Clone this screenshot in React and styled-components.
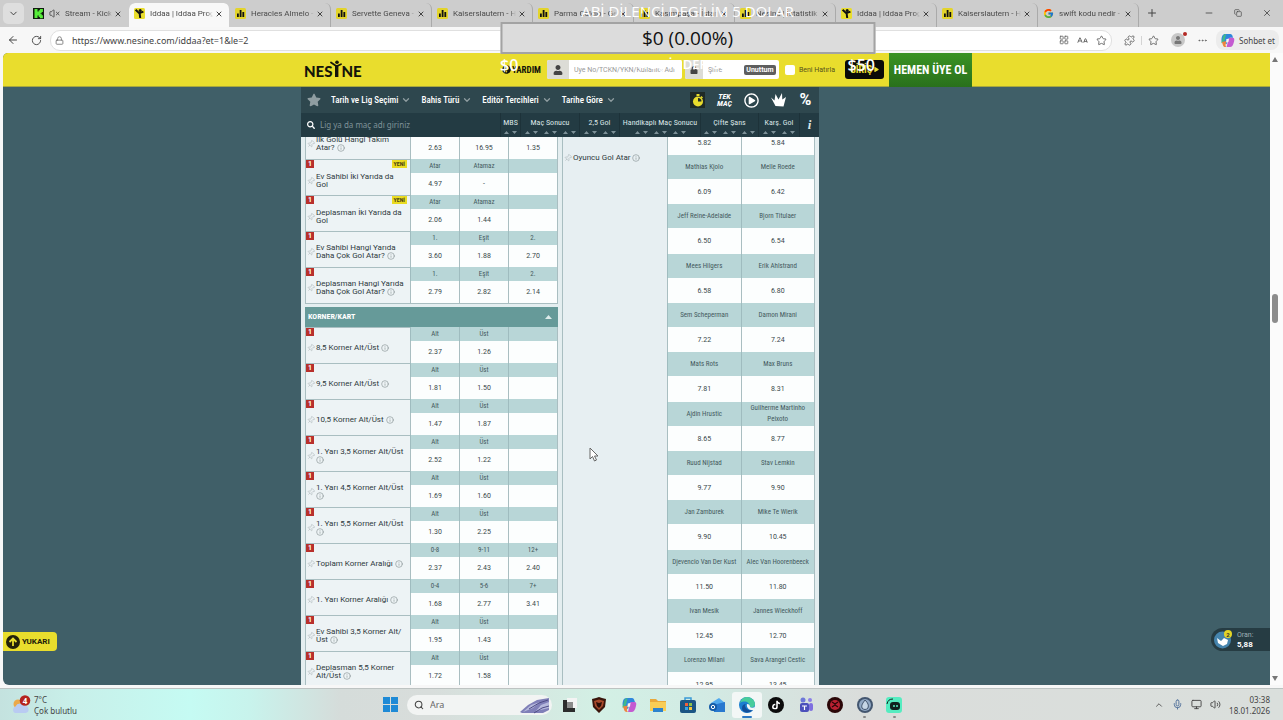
import React from "react";
import styled, { createGlobalStyle } from "styled-components";
import {
  ChevronDown, ChevronUp, X, Plus, Minus, Copy, ArrowLeft, RotateCw, Lock, LayoutGrid, Star, Puzzle,
  Ellipsis, VolumeX, Volume2, Mic, Monitor, Search, Pin, Info, ALargeSmall,
} from "lucide-react";
import { FcGoogle } from "react-icons/fc";
import { FaStar, FaSearch, FaUser, FaLock, FaPlay, FaTiktok, FaRegPlayCircle, FaQuestionCircle } from "react-icons/fa";

const narrow = `"Roboto Condensed", "Liberation Sans Narrow", Roboto, sans-serif`;
const ui = `"Noto Sans", "Open Sans", sans-serif`;

const tabs = [
  { icon: "kick", title: "Stream - Kick", muted: true },
  { icon: "nesine", title: "Iddaa | Iddaa Programı", active: true },
  { icon: "stats", title: "Heracles Almelo - İstatistik" },
  { icon: "stats", title: "Servette Geneva - İstatistik" },
  { icon: "stats", title: "Kaiserslautern - Hertha" },
  { icon: "stats", title: "Parma Calcio - Genoa" },
  { icon: "stats", title: "Kasımpaşa - İstanbul" },
  { icon: "stats", title: "Nesine | İstatistik" },
  { icon: "nesine", title: "Iddaa | Iddaa Programı" },
  { icon: "stats", title: "Kaiserslautern - Hertha" },
  { icon: "google", title: "swift kodu nedir - Google" },
];

const menus = ["Tarih ve Lig Seçimi", "Bahis Türü", "Editör Tercihleri", "Tarihe Göre"];

const sortColumns = [
  { label: "MBS", width: 20, pairs: 1 },
  { label: "Maç Sonucu", width: 59, pairs: 3 },
  { label: "2,5 Gol", width: 40, pairs: 2 },
  { label: "Handikaplı Maç Sonucu", width: 81, pairs: 3 },
  { label: "Çifte Şans", width: 58, pairs: 3 },
  { label: "Karş. Gol", width: 41, pairs: 2 },
];

const goalMarkets = [
  { name: "İlk Golü Hangi Takım Atar?", info: true, heads: ["1", "Olmaz", "2"], odds: ["2.63", "16.95", "1.35"] },
  { name: "Ev Sahibi İki Yarıda da Gol", fresh: true, heads: ["Atar", "Atamaz", ""], odds: ["4.97", "-", ""] },
  { name: "Deplasman İki Yarıda da Gol", fresh: true, heads: ["Atar", "Atamaz", ""], odds: ["2.06", "1.44", ""] },
  { name: "Ev Sahibi Hangi Yarıda Daha Çok Gol Atar?", info: true, heads: ["1.", "Eşit", "2."], odds: ["3.60", "1.88", "2.70"] },
  { name: "Deplasman Hangi Yarıda Daha Çok Gol Atar?", info: true, heads: ["1.", "Eşit", "2."], odds: ["2.79", "2.82", "2.14"] },
];

const cornerMarkets = [
  { name: "8,5 Korner Alt/Üst", info: true, heads: ["Alt", "Üst", ""], odds: ["2.37", "1.26", ""] },
  { name: "9,5 Korner Alt/Üst", info: true, heads: ["Alt", "Üst", ""], odds: ["1.81", "1.50", ""] },
  { name: "10,5 Korner Alt/Üst", info: true, heads: ["Alt", "Üst", ""], odds: ["1.47", "1.87", ""] },
  { name: "1. Yarı 3,5 Korner Alt/Üst", info: true, heads: ["Alt", "Üst", ""], odds: ["2.52", "1.22", ""] },
  { name: "1. Yarı 4,5 Korner Alt/Üst", info: true, heads: ["Alt", "Üst", ""], odds: ["1.69", "1.60", ""] },
  { name: "1. Yarı 5,5 Korner Alt/Üst", info: true, heads: ["Alt", "Üst", ""], odds: ["1.30", "2.25", ""] },
  { name: "Toplam Korner Aralığı", info: true, heads: ["0-8", "9-11", "12+"], odds: ["2.37", "2.43", "2.40"] },
  { name: "1. Yarı Korner Aralığı", info: true, heads: ["0-4", "5-6", "7+"], odds: ["1.68", "2.77", "3.41"] },
  { name: "Ev Sahibi 3,5 Korner Alt/Üst", info: true, heads: ["Alt", "Üst", ""], odds: ["1.95", "1.43", ""] },
  { name: "Deplasman 5,5 Korner Alt/Üst", info: true, heads: ["Alt", "Üst", ""], odds: ["1.72", "1.58", ""] },
];

const scorers = [
  [["", "5.82"], ["", "5.84"]],
  [["Mathias Kjolo", "6.09"], ["Melle Roede", "6.42"]],
  [["Jeff Reine-Adelaide", "6.50"], ["Bjorn Titulaer", "6.54"]],
  [["Mees Hilgers", "6.58"], ["Erik Ahlstrand", "6.80"]],
  [["Sem Scheperman", "7.22"], ["Damon Mirani", "7.24"]],
  [["Mats Rots", "7.81"], ["Max Bruns", "8.31"]],
  [["Ajdin Hrustic", "8.65"], ["Guilherme Martinho Peixoto", "8.77"]],
  [["Ruud Nijstad", "9.77"], ["Stav Lemkin", "9.90"]],
  [["Jan Zamburek", "9.90"], ["Mike Te Wierik", "10.45"]],
  [["Djevencio Van Der Kust", "11.50"], ["Alec Van Hoorenbeeck", "11.80"]],
  [["Ivan Mesik", "12.45"], ["Jannes Wieckhoff", "12.70"]],
  [["Lorenzo Milani", "12.95"], ["Sava Arangel Cestic", "13.45"]],
];

const GlobalStyle = createGlobalStyle`
  * { box-sizing: border-box; }
  body { margin: 0; background: #f7f7f7; font-family: ${ui}; }
  button, input { font-family: inherit; margin: 0; padding: 0; border: 0; background: none; color: inherit; }
  input { min-width: 0; outline: none; }
  a { color: inherit; text-decoration: none; }
  svg { display: block; flex: none; }
`;

const Screen = styled.div`
  position: relative;
  display: flex;
  flex-direction: column;
  height: 100vh;
  overflow: hidden;
`;

/* ---------- browser ---------- */

const TabStrip = styled.div`
  display: flex;
  align-items: stretch;
  height: 27px;
  padding: 3px 2px 0 3px;
  background: #cdcdcd;
  flex: none;
`;

const TabSearch = styled.button`
  display: grid;
  place-items: center;
  width: 21px;
  height: 21px;
  margin-right: 4px;
  border-radius: 5px;
  background: #dedede;
  color: #333;
`;

const Tab = styled.div`
  display: flex;
  align-items: center;
  gap: 5px;
  flex: 0 1 101px;
  min-width: 0;
  padding: 0 6px 3px 5px;
  border-radius: 6px 6px 0 0;
  border-right: 1px solid ${(p) => (p.$active || p.$muted ? "transparent" : "#aaa")};
  background: ${(p) => (p.$active ? "#f8f8f8" : "none")};
  background-clip: padding-box;
  color: #4a4a4a;
`;

const TabTitle = styled.span`
  flex: 1;
  overflow: hidden;
  white-space: nowrap;
  margin-right: -3px;
  font: 8px/12px Roboto, sans-serif;
  mask-image: linear-gradient(90deg, #000 90%, transparent);
`;

const PlainButton = styled.button`
  display: grid;
  place-items: center;
  color: #444;
`;

const NewTab = styled(PlainButton)`
  width: 26px;
  height: 20px;
`;

const WindowButtons = styled.div`
  display: flex;
  gap: 20px;
  height: 20px;
  margin-left: auto;
  padding-right: 9px;
`;

const AddressBar = styled.div`
  display: flex;
  align-items: center;
  gap: 12px;
  height: 26px;
  padding: 0 4px 0 7px;
  background: #f7f7f7;
  color: #666;
  flex: none;
`;

const UrlBox = styled.label`
  display: flex;
  align-items: center;
  gap: 8px;
  flex: 1;
  height: 21px;
  margin-left: -4px;
  padding: 0 4px;
  border: 1px solid #e0e0e0;
  border-radius: 10px;
  background: #fff;
`;

const UrlInput = styled.input`
  flex: 1;
  font-size: 9px;
  color: #444;
`;

const Divider = styled.span`
  width: 1px;
  height: 9px;
  margin: 0 -6px;
  background: #d4d4d4;
`;

const Avatar = styled.span`
  position: relative;
  display: grid;
  place-items: center;
  width: 14px;
  height: 14px;
  border-radius: 50%;
  background: #c8c8c8;
  color: #777;

  &::after {
    content: "";
    position: absolute;
    top: -1px;
    right: -2px;
    width: 4px;
    height: 4px;
    border-radius: 50%;
    background: #b42a25;
  }
`;

const ChatButton = styled.button`
  display: flex;
  align-items: center;
  gap: 4px;
  height: 20px;
  margin-left: -4px;
  padding: 0 4px;
  border-radius: 8px;
  background: #ececec;
  font-size: 8px;
  color: #444;
`;

/* ---------- page ---------- */

const Viewport = styled.div`
  display: flex;
  flex: 1;
  min-height: 0;
  padding-left: 3px;
  background: #f7f7f7;
`;

const Page = styled.main`
  position: relative;
  display: flex;
  flex-direction: column;
  flex: 1;
  overflow: hidden;
  border-radius: 5px 0 0 6px;
  background: #405f68;
`;

const Scrollbar = styled.div`
  display: flex;
  flex-direction: column;
  align-items: center;
  justify-content: space-between;
  width: 13px;
  padding: 4px 3px 4px 0;
  background: #fbfbfb;
`;

const Thumb = styled.span`
  width: 6px;
  height: 29px;
  margin-top: -122px;
  border-radius: 3px;
  background: #8c8c8c;
`;

const Header = styled.header`
  flex: none;
  height: 34px;
  background: #e9dd2d;
  border-bottom: 1px solid #a9a83c;
`;

const Container = styled.div`
  display: flex;
  align-items: center;
  width: 671px;
  height: 100%;
  margin: 0 auto;
`;

const Logo = styled.a`
  display: flex;
  align-items: flex-end;
  margin: 0 auto 0 3px;
  font: 900 15px/17px Lato, sans-serif;
  color: #14140a;

  svg { overflow: visible; margin-bottom: 3px; }
`;

const Help = styled.a`
  display: flex;
  align-items: center;
  gap: 1px;
  margin-right: 6px;
  font: bold 9px/12px ${narrow};
  color: #14140a;
`;

const Field = styled.label`
  display: flex;
  align-items: center;
  width: ${(p) => p.$width}px;
  height: 19px;
  margin-right: 3px;
  padding-right: 3px;
  border-radius: 2px;
  overflow: hidden;
  background: #fff;

  input {
    flex: 1;
    padding-left: 5px;
    font: 7px/12px Roboto, sans-serif;
  }
  input::placeholder { color: #999; opacity: 1; }
`;

const FieldIcon = styled.span`
  display: grid;
  place-items: center;
  width: ${(p) => p.$width}px;
  height: 100%;
  background: #dcdcd6;
  color: #444;
`;

const Forgot = styled.button`
  width: 32px;
  height: 10px;
  border-radius: 2px;
  background: #5e5e5e;
  color: #fff;
  font: bold 7px/10px Roboto, sans-serif;
`;

const Remember = styled.label`
  display: flex;
  align-items: center;
  gap: 4px;
  margin: 0 10px 0 3px;
  font: 7px/10px Roboto, sans-serif;
  color: #57531c;
  white-space: nowrap;

  input {
    appearance: none;
    width: 10px;
    height: 10px;
    border-radius: 2px;
    background: #fff;
  }
`;

const Login = styled.button`
  display: flex;
  align-items: center;
  justify-content: center;
  gap: 2px;
  width: 39px;
  height: 19px;
  margin-right: 5px;
  border-radius: 3px;
  background: #0b0b08;
  color: #e9dd2d;
  font: bold 10px/12px ${narrow};
`;

const SignUp = styled.a`
  display: grid;
  place-items: center;
  width: 83px;
  height: 34px;
  align-self: flex-start;
  background: linear-gradient(#3a9325, #29701b);
  color: #fff;
  font: bold 12px/16px ${narrow};
`;

const Body = styled.div`
  display: flex;
  flex: 1;
  min-height: 0;
  width: 671px;
  margin: 0 auto;
`;

const Bulletin = styled.section`
  display: flex;
  flex-direction: column;
  width: 518px;
  background: #e4eef0;
`;

const Toolbar = styled.div`
  display: flex;
  align-items: center;
  flex: none;
  height: 26px;
  padding: 0 6px;
  background: #2e474e;
  color: #fff;
`;

const MenuButton = styled.button`
  display: flex;
  align-items: center;
  gap: 3px;
  margin-left: 10px;
  font: 500 9px/12px ${narrow};
  white-space: nowrap;
`;

const ToolIcons = styled.div`
  display: flex;
  align-items: center;
  gap: 12px;
  margin-left: auto;
`;

const ToolButton = styled.button`
  display: grid;
  place-items: center;
  width: 15px;
  height: 16px;
  color: ${(p) => (p.$on ? "#e9dd2d" : "#fff")};
  background: ${(p) => (p.$on ? "#1f2a26" : "none")};
  font: italic bold 8px/7px ${narrow};
`;

const PercentButton = styled(ToolButton)`
  font: bold 16px/16px Roboto, sans-serif;
`;

const SortBar = styled.div`
  display: flex;
  flex: none;
  height: 24px;
  background: #233b43;
  color: #dbe5e7;
`;

const LeagueSearch = styled.label`
  display: flex;
  align-items: center;
  gap: 5px;
  flex: 1;
  padding-left: 6px;

  input { flex: 1; font: 8px/12px ${ui}; }
  input::placeholder { color: #7f9298; opacity: 1; }
`;

const SortColumn = styled.div`
  display: flex;
  flex-direction: column;
  align-items: center;
  width: ${(p) => p.$width}px;
  padding-top: 4px;
  border-left: 1px solid #1d3239;
  font: 8px/11px ${narrow};
  white-space: nowrap;
`;

const Arrows = styled.span`
  display: flex;
  gap: 4px;
  margin-top: 3px;
`;

const InfoButton = styled.button`
  width: 20px;
  border-left: 1px solid #1d3239;
  font: italic bold 13px/24px "Liberation Serif", serif;
`;

const Scroll = styled.div`
  flex: 1;
  min-height: 0;
  overflow: hidden;
`;

/* scrolled part way through a market, like the live page */
const Columns = styled.div`
  display: flex;
  gap: 4px;
  margin: -31px 4px 0;
`;

const LeftColumn = styled.div`
  width: 253px;
  padding-top: 17px;
`;

const MarketTable = styled.table`
  width: 100%;
  table-layout: fixed;
  border-spacing: 0;
  border-right: 1px solid #a9bec1;
  border-bottom: 1px solid #a9bec1;
`;

const MarketName = styled.th`
  position: relative;
  width: 105px;
  height: 36px;
  padding: 6px 4px 0 1px;
  border-top: 1px solid #a9bec1;
  border-left: 1px solid #a9bec1;
  background: #edf3f5;
  color: #2e3a3d;
  text-align: left;
  vertical-align: middle;
  font: 8px/8px Roboto, sans-serif;
`;

const NameLine = styled.span`
  display: flex;
  align-items: center;
  gap: 1px;

  svg { color: #b3bdbf; }
  svg.pin { transform: rotate(45deg); }
  svg.info { display: inline-block; vertical-align: middle; color: #8b9799; }
`;

const CodeBadge = styled.span`
  position: absolute;
  top: 0;
  left: 0;
  width: 8px;
  height: 8px;
  background: #b8302c;
  color: #fff;
  font: bold 7px/8px Roboto, sans-serif;
  text-align: center;
`;

const NewBadge = styled.span`
  position: absolute;
  top: 0;
  right: 3px;
  padding: 0 2px;
  background: #eadb22;
  color: #4a4512;
  font: bold 6px/8px ${narrow};
`;

const HeadCell = styled.td`
  height: ${(p) => p.$height}px;
  padding: 0 4px;
  border-left: 1px solid #9fbcbf;
  background: #b8d6d7;
  color: #455a5e;
  text-align: center;
  font: 7px/${(p) => (p.$height > 20 ? 11 : 10)}px ${narrow};
`;

const OddCell = styled.td`
  height: ${(p) => p.$height}px;
  padding: 0;
  border-left: 1px solid #a9bec1;
  background: #fcfefe;
  color: #38474a;
  text-align: center;
  font: 7px/10px Roboto, sans-serif;
`;

const SectionTitle = styled.h2`
  display: flex;
  align-items: center;
  justify-content: space-between;
  height: 20px;
  margin: 3px 0 0;
  padding: 0 6px 0 3px;
  background: #669a99;
  color: #fff;
  font: bold 8px/12px ${narrow};
`;

const RightColumn = styled.div`
  display: flex;
  flex: 1;
  border-left: 1px solid #a9bec1;
  border-right: 1px solid #a9bec1;
  background: #e7eff2;
`;

const ScorerLabel = styled.div`
  flex: 1;
  padding: 48px 0 0 1px;
  font: 8px/8px Roboto, sans-serif;
  color: #2e3a3d;
`;

const ScorerTable = styled.table`
  width: 147px;
  table-layout: fixed;
  border-spacing: 0;

  tr:nth-child(6n) td { height: 26px; }
`;

const ToTop = styled.button`
  position: absolute;
  left: 0;
  bottom: 34px;
  display: flex;
  align-items: center;
  gap: 2px;
  height: 19px;
  padding: 0 7px 0 3px;
  border-radius: 0 4px 4px 0;
  background: #e9dd2d;
  color: #23210a;
  font: bold 8px/12px Roboto, sans-serif;
`;

const Coupon = styled.button`
  position: absolute;
  right: 0;
  bottom: 34px;
  display: flex;
  align-items: center;
  gap: 5px;
  width: 59px;
  height: 23px;
  padding-left: 3px;
  border-radius: 12px 0 0 12px;
  background: #263c43;
  color: #fff;
  text-align: left;
  font: bold 8px/9px Roboto, sans-serif;

  small { display: block; font: 7px/9px Roboto, sans-serif; color: #9fb0b4; }
`;

/* ---------- taskbar ---------- */

const Taskbar = styled.footer`
  display: grid;
  grid-template-columns: 1fr auto 1fr;
  align-items: center;
  flex: none;
  height: 32px;
  margin-top: 3px;
  padding: 0 13px 0 12px;
  border-top: 1px solid #bdc3c2;
  background: linear-gradient(90deg, #c4e2df 0, #c8efe9 70px, #c5fbf3 190px, #c8f3ec 250px, #d5dcda 340px, #d8dddb 430px, #d3f0e5 600px, #d2ebe4 700px, #dadddb 860px, #dadfdc 100%);
  color: #444;
`;

const Weather = styled.button`
  display: flex;
  align-items: center;
  gap: 3px;
  font-size: 8px;
  line-height: 11px;
  text-align: left;
`;

const Center = styled.div`
  display: flex;
  align-items: center;
  margin-left: 10px;
`;

const SearchPill = styled.label`
  display: flex;
  align-items: center;
  gap: 6px;
  width: 145px;
  height: 20px;
  margin: 0 3px 0 9px;
  padding: 0 2px 0 7px;
  border-radius: 10px;
  background: #f2f4f3;
  overflow: hidden;

  input { flex: 1; width: 60px; font-size: 9px; }
  input::placeholder { color: #666; opacity: 1; }
`;

const Apps = styled.nav`
  display: flex;
  width: 354px;
`;

const AppButton = styled.button`
  display: grid;
  place-items: center;
  position: relative;
  flex: 1;
  height: 26px;
  border-radius: 3px;
  background: ${(p) => (p.$open ? "#f3f7f6" : "none")};

  &::after {
    content: "";
    position: absolute;
    bottom: 0;
    width: ${(p) => (p.$open ? 10 : 3)}px;
    height: 2px;
    border-radius: 1px;
    background: ${(p) => (p.$open ? "#2a78c4" : p.$running ? "#888" : "none")};
  }
`;

const Tray = styled.div`
  display: flex;
  align-items: center;
  justify-content: flex-end;
  gap: 8px;
`;

const Clock = styled.time`
  width: 41px;
  font-size: 8px;
  line-height: 11px;
  text-align: right;
`;

/* ---------- stream overlay ---------- */

const Overlay = styled.div`
  position: absolute;
  top: 0;
  left: calc(50% + 46px);
  transform: translateX(-50%);
  width: 375px;
  color: #fff;
  text-align: center;
  pointer-events: none;
`;

const Alert = styled.div`
  height: 22px;
  font: 15px/22px "Open Sans", sans-serif;
`;

const Goal = styled.div`
  height: 32px;
  border: 2px solid #a3a3a3;
  background: #dcdcdc;
  color: #111;
  font: 19px/29px "Open Sans", sans-serif;
`;

const GoalRange = styled.div`
  display: flex;
  justify-content: space-between;
  font: 600 16px/22px "Open Sans", sans-serif;
`;

const GoalDate = styled.span`
  font: 600 13px/20px "Open Sans", sans-serif;
`;

const Cursor = styled.svg`
  position: absolute;
  top: 447px;
  left: 589px;
`;

function LogoFigure() {
  return (
    <svg width="9" height="17" viewBox="0 0 9 17">
      <circle cx="5" cy="2.2" r="1.8" fill="#14140a" />
      <path d="M-1 2.500 4.500 6.200 9 4.200" stroke="#14140a" strokeWidth="1.800" fill="none" strokeLinecap="round" />
      <path d="M3 5.500h3.400V17H3z" fill="#14140a" />
    </svg>
  );
}

function Favicon({ kind }) {
  if (kind === "google") return <FcGoogle size={11} />;
  if (kind === "kick") {
    return (
      <svg width="11" height="11" viewBox="0 0 11 11">
        <rect width="11" height="11" fill="#101a0e" />
        <path d="M1.5 1h3v2.5h1.2V2.2h1.2V1h3v3H8.7v1.3H7.5v.6h1.2v1.3h1.2v3h-3V8.9H5.7V7.6H4.5V10h-3z" fill="#57ed3a" />
      </svg>
    );
  }
  if (kind === "nesine") {
    return (
      <svg width="11" height="11" viewBox="0 0 11 11">
        <rect width="11" height="11" rx="1.5" fill="#e9dd2d" />
        <circle cx="6.2" cy="2.4" r="1.5" fill="#111" />
        <path d="M1.6 1.8 5.2 5.2 9.4 3.6M5.6 5l.6 5" stroke="#111" strokeWidth="2" fill="none" />
      </svg>
    );
  }
  return (
    <svg width="11" height="11" viewBox="0 0 11 11">
      <rect width="11" height="11" rx="1.5" fill="#e3d42c" />
      <path d="M2 5.500h1.800V9H2zM4.700 2h1.800v7H4.700zM7.400 4h1.800v5H7.400z" fill="#111" />
    </svg>
  );
}

function CopilotIcon({ size }) {
  return (
    <svg width={size} height={size} viewBox="0 0 16 16">
      <path d="M6 1h5c1.500 0 2 1 2.400 2.400L14 5h-3c-1.500 0-2 1-2.500 2.500L7 12 2 9C1 7 2 3 3 2s2-1 3-1z" fill="#2f86dd" />
      <path d="M2.500 7C3 3 4 1 6.500 1L5 8 2 11c-1-1-.5-2 .5-4z" fill="#3fb98a" />
      <path d="M10 5h3.500c2 0 2 2 1.500 4-1 4-2 6-4.500 6H7L9 7c.2-1 .4-2 1-2z" fill="#c45bd1" />
      <path d="M2 9.500 7 8.500 6 12c-.4 2 .5 3 1.500 3H6c-2 0-2.500-1-3-2.500z" fill="#ed8440" />
      <path d="M6.800 6.500 9.500 6 9 9.500 6.500 10z" fill="#f4f4f4" />
    </svg>
  );
}

function SortArrows({ pairs }) {
  return (
    <Arrows>
      {Array.from({ length: pairs }, (_, i) => (
        <svg key={i} width="15" height="3" viewBox="0 0 15 3" fill="#7d9198">
          <path d="M1 3 3.500 0 6 3zM9 0h5l-2.500 3z" />
        </svg>
      ))}
    </Arrows>
  );
}

function Market({ name, info, fresh, heads, odds }) {
  return (
    <>
      <tr>
        <MarketName rowSpan={2} scope="row">
          <CodeBadge>1</CodeBadge>
          {fresh && <NewBadge>YENİ</NewBadge>}
          <NameLine>
            <Pin className="pin" size={8} />
            <span>
              {name} {info && <Info className="info" size={8} />}
            </span>
          </NameLine>
        </MarketName>
        {heads.map((head, i) => (
          <HeadCell key={i} $height={14}>{head}</HeadCell>
        ))}
      </tr>
      <tr>
        {odds.map((odd, i) => (
          <OddCell key={i} $height={22}>{odd}</OddCell>
        ))}
      </tr>
    </>
  );
}

function Browser() {
  return (
    <>
      <TabStrip>
        <TabSearch aria-label="Sekme ara"><ChevronDown size={11} strokeWidth={2} /></TabSearch>
        {tabs.map((tab, i) => (
          <Tab key={i} $active={tab.active} $muted={tab.muted}>
            <Favicon kind={tab.icon} />
            {tab.muted && <VolumeX size={11} />}
            <TabTitle>{tab.title}</TabTitle>
            <PlainButton aria-label="Kapat"><X size={8} strokeWidth={3} /></PlainButton>
          </Tab>
        ))}
        <NewTab aria-label="Yeni sekme"><Plus size={12} /></NewTab>
        <WindowButtons>
          <PlainButton aria-label="Simge durumu"><Minus size={10} /></PlainButton>
          <PlainButton aria-label="Pencere"><Copy size={8} /></PlainButton>
          <PlainButton aria-label="Kapat"><X size={10} /></PlainButton>
        </WindowButtons>
      </TabStrip>
      <AddressBar>
        <PlainButton aria-label="Geri"><ArrowLeft size={12} /></PlainButton>
        <PlainButton aria-label="Yenile"><RotateCw size={11} /></PlainButton>
        <UrlBox>
          <Lock size={9} />
          <UrlInput aria-label="Adres" defaultValue="https://www.nesine.com/iddaa?et=1&le=2" />
          <LayoutGrid size={10} />
          <ALargeSmall size={11} />
          <Star size={11} />
        </UrlBox>
        <Puzzle size={11} />
        <Divider />
        <Star size={11} />
        <Avatar><FaUser size={8} /></Avatar>
        <Ellipsis size={11} />
        <ChatButton><CopilotIcon size={15} />Sohbet et</ChatButton>
      </AddressBar>
    </>
  );
}

function SiteHeader() {
  return (
    <Header>
      <Container>
        <Logo href="#">NES<LogoFigure />NE</Logo>
        <Help href="#"><FaQuestionCircle size={9} />YARDIM</Help>
        <Field $width={135}>
          <FieldIcon $width={22}><FaUser size={10} /></FieldIcon>
          <input aria-label="Üye No" placeholder="Üye No/TCKN/YKN/Kullanıcı Adı" />
        </Field>
        <Field $width={94}>
          <FieldIcon $width={18}><FaLock size={8} /></FieldIcon>
          <input type="password" aria-label="Şifre" placeholder="Şifre" />
          <Forgot>Unuttum</Forgot>
        </Field>
        <Remember><input type="checkbox" />Beni Hatırla</Remember>
        <Login>GİRİŞ<FaPlay size={5} /></Login>
        <SignUp href="#">HEMEN ÜYE OL</SignUp>
      </Container>
    </Header>
  );
}

function BulletinPanel() {
  return (
    <Bulletin>
      <Toolbar>
        <FaStar size={14} color="#8f9da1" />
        {menus.map((menu) => (
          <MenuButton key={menu}>{menu}<ChevronDown size={10} strokeWidth={3} color="#8f9da1" /></MenuButton>
        ))}
        <ToolIcons>
          <ToolButton $on aria-label="Canlı">
            <svg width="12" height="13" viewBox="0 0 12 13">
              <path d="M4.500 0h3v2h-3zM9.500 2l1.500 1.500-1 1L8.500 3z" fill="currentColor" />
              <circle cx="6" cy="7.500" r="5" fill="currentColor" />
              <path d="M6 7.500V4a3.500 3.500 0 0 1 3.500 3.500z" fill="#1f2a26" />
            </svg>
          </ToolButton>
          <ToolButton>TEK MAÇ</ToolButton>
          <ToolButton aria-label="Canlı izle"><FaRegPlayCircle size={15} /></ToolButton>
          <ToolButton aria-label="Kral oran">
            <svg width="15" height="14" viewBox="0 0 15 14" fill="#fff">
              <path d="M0 4.500 3.500 7.500 4.500 1l3 5.500L11 0l.3 6.500L15 4l-2.500 9.500-8-.5z" />
            </svg>
          </ToolButton>
          <PercentButton aria-label="Oran">%</PercentButton>
        </ToolIcons>
      </Toolbar>
      <SortBar>
        <LeagueSearch>
          <FaSearch size={8} color="#fff" />
          <input aria-label="Lig ya da maç ara" placeholder="Lig ya da maç adı giriniz" />
        </LeagueSearch>
        {sortColumns.map((col) => (
          <SortColumn key={col.label} $width={col.width}>
            {col.label}
            <SortArrows pairs={col.pairs} />
          </SortColumn>
        ))}
        <InfoButton>i</InfoButton>
      </SortBar>
      <Scroll>
        <Columns>
          <LeftColumn>
            <MarketTable>
              <tbody>{goalMarkets.map((m) => <Market key={m.name} {...m} />)}</tbody>
            </MarketTable>
            <SectionTitle>
              KORNER/KART
              <svg width="7" height="4" viewBox="0 0 7 4"><path d="M0 4 3.500 0 7 4z" fill="#dcebea" /></svg>
            </SectionTitle>
            <MarketTable>
              <tbody>{cornerMarkets.map((m) => <Market key={m.name} {...m} />)}</tbody>
            </MarketTable>
          </LeftColumn>
          <RightColumn>
            <ScorerLabel>
              <NameLine>
                <Pin className="pin" size={8} />
                <span>Oyuncu Gol Atar <Info className="info" size={8} /></span>
              </NameLine>
            </ScorerLabel>
            <ScorerTable>
              <tbody>
                {scorers.map((pair, i) => (
                  <React.Fragment key={i}>
                    <tr>{pair.map(([name], j) => <HeadCell key={j} $height={24}>{name}</HeadCell>)}</tr>
                    <tr>{pair.map(([, odd], j) => <OddCell key={j} $height={25}>{odd}</OddCell>)}</tr>
                  </React.Fragment>
                ))}
              </tbody>
            </ScorerTable>
          </RightColumn>
        </Columns>
      </Scroll>
    </Bulletin>
  );
}

function WeatherIcon() {
  return (
    <svg width="19" height="20" viewBox="0 0 19 20">
      <circle cx="6" cy="9" r="4.500" fill="#eba94a" />
      <path d="M3 18a3.500 3.500 0 0 1 .5-6.500 5 5 0 0 1 9-.5 3.500 3.500 0 0 1 1 7z" fill="#b9cbf2" />
      <circle cx="13" cy="5.500" r="5.300" fill="#b5231f" />
      <text x="13" y="8.500" textAnchor="middle" fontSize="8" fontWeight="bold" fontFamily="Noto Sans" fill="#fff">4</text>
    </svg>
  );
}

const appIcons = [
  { name: "Görev görünümü", art: <><path d="M5 1h10v10H5z" fill="#f4f4f4" /><path d="M1 3h4v8h8v4H1z" fill="#2c2c2c" /><path d="M5 5h6v6H5z" fill="#8b8b8b" /></> },
  { name: "Brave", art: <><path d="m8 0 3 1 4 1-1 8-6 6-6-6-1-8 4-1z" fill="#3a160c" /><path d="M8 2.500 13 4l-1 5-4 4-4-4-1-5z" fill="#a8492a" /><path d="m5 5 3 1 3-1-1 4-2 2-2-2z" fill="#2b0e08" /></> },
  { name: "Copilot", art: null },
  { name: "Dosya Gezgini", art: <><path d="M0 2h6l2 2h8v10H0z" fill="#e9a83a" /><path d="M0 5h16v9H0z" fill="#f8cd55" /><path d="M3 11h10v4H3z" fill="#2d83cd" /></> },
  { name: "Mağaza", art: <><path d="M5 4V1h6v3" stroke="#3a9ad6" strokeWidth="1.500" fill="none" /><rect y="3" width="16" height="13" rx="2" fill="#1b5584" /><path d="M5 6h3v3H5z" fill="#f25f3a" /><path d="M9 6h3v3H9z" fill="#8bc34a" /><path d="M5 10h3v3H5z" fill="#37a5e8" /><path d="M9 10h3v3H9z" fill="#f8c63a" /></> },
  { name: "Outlook", art: <><path d="m2 6 8-5 6 5v8H4z" fill="#51a9ee" /><path d="m4 8 12-3v10H5z" fill="#2878cf" /><circle cx="4" cy="10" r="4" fill="#155ca8" /><circle cx="4" cy="10" r="1.700" fill="none" stroke="#fff" /></> },
  { name: "Edge", open: true, art: <><circle cx="8" cy="8" r="8" fill="#1c7fd0" /><path d="M1 6c1-4 4-6 7-6 5 0 8 4 8 7 0 3-3 4-5 3 0-5-6-7-10-4z" fill="#48cc9c" /><path d="M6 8c0 4 4 6 8 5-4 4-11 3-11-2 0-3 2-4 4-4z" fill="#134f99" /><path d="M8 7c2 0 3 1 3 3 1 1 3 1 5 0l-1 3c-4 1-8-2-7-6z" fill="#f3f7f6" /></> },
  { name: "TikTok", art: null },
  { name: "Teams", art: <><circle cx="5" cy="3" r="2.500" fill="#6d78d8" /><circle cx="12" cy="3" r="2" fill="#8c7fe8" /><rect x="2" y="6" width="9" height="9" rx="2" fill="#4b50bb" /><rect x="11" y="6" width="4" height="8" rx="2" fill="#7f70e0" /><path d="M4 9h5M6.500 9v4" stroke="#fff" strokeWidth="1.200" /></> },
  { name: "Oyun", art: <><circle cx="8" cy="8" r="8" fill="#2b0708" /><circle cx="8" cy="8" r="5" fill="#bb2032" /><path d="m5 5 3 2 3-2M5 10l3-2 3 2" stroke="#2b0708" fill="none" strokeWidth="1.300" /></> },
  { name: "Tarayıcı", running: true, art: <><circle cx="8" cy="8" r="8" fill="#43566f" /><circle cx="8" cy="8" r="6" fill="#91a8c4" /><path d="M8 3c3 3 4 5 3 8-2 2-4 2-6 0-1-3 1-5 3-8z" fill="#c6d6e6" stroke="#43566f" /></> },
  { name: "Streamlabs", running: true, art: <><rect width="16" height="16" rx="3" fill="#55ecc0" /><rect x="4" y="5" width="10" height="8" rx="3" fill="#10231f" /><path d="M1 7a6 6 0 0 1 6-5" stroke="#10231f" fill="none" /><circle cx="8" cy="9" r="1" fill="#55ecc0" /><circle cx="11" cy="9" r="1" fill="#55ecc0" /></> },
];

function AppIcon({ name, art }) {
  if (name === "Copilot") return <CopilotIcon size={16} />;
  if (name === "TikTok") {
    return (
      <svg width="16" height="16" viewBox="0 0 16 16">
        <circle cx="8" cy="8" r="8" fill="#0b0b0b" />
        <FaTiktok x="3.500" y="3.500" size={9} color="#fff" />
      </svg>
    );
  }
  return <svg width="16" height="16" viewBox="0 0 16 16">{art}</svg>;
}

function TaskbarPanel() {
  return (
    <Taskbar>
      <Weather><WeatherIcon /><span>7°C<br />Çok bulutlu</span></Weather>
      <Center>
        <PlainButton aria-label="Başlat">
          <svg width="15" height="15" viewBox="0 0 15 15" fill="#1e8ad6">
            <path d="M0 0h7v7H0zM8 0h7v7H8zM0 8h7v7H0zM8 8h7v7H8z" />
          </svg>
        </PlainButton>
        <SearchPill>
          <Search size={10} strokeWidth={2.500} />
          <input aria-label="Ara" placeholder="Ara" />
          <svg width="30" height="20" viewBox="0 0 30 20">
            <path d="M0 17 8 10l9-5 12-2v12l-6 3H2z" fill="#8080b8" />
            <path d="m3 17 8-7 9-3-7 6zM16 16l5-6 8-3v6z" fill="#b6b9dc" />
            <path d="m9 14 10-6 9-3M14 18l8-5 7-2" stroke="#4e4d86" fill="none" />
          </svg>
        </SearchPill>
        <Apps>
          {appIcons.map((app) => (
            <AppButton key={app.name} aria-label={app.name} $open={app.open} $running={app.running}>
              <AppIcon {...app} />
            </AppButton>
          ))}
        </Apps>
      </Center>
      <Tray>
        <ChevronUp size={10} />
        <Mic size={11} color="#4c6c98" />
        <Monitor size={11} />
        <Volume2 size={11} />
        <Clock>03:38<br />18.01.2026</Clock>
      </Tray>
    </Taskbar>
  );
}

export default function App() {
  return (
    <Screen>
      <GlobalStyle />
      <Browser />
      <Viewport>
        <Page>
          <SiteHeader />
          <Body><BulletinPanel /></Body>
          <ToTop>
            <svg width="14" height="14" viewBox="0 0 14 14">
              <circle cx="7" cy="7" r="7" fill="#23210a" />
              <path d="M7 11V4M3.500 7 7 3.500 10.500 7" stroke="#e9dd2d" strokeWidth="1.800" fill="none" />
            </svg>
            YUKARI
          </ToTop>
          <Coupon>
            <svg width="18" height="19" viewBox="0 0 18 19">
              <circle cx="8.500" cy="10" r="8.500" fill="#4584ad" />
              <path d="m3 8 4 3 3-3 4 2-1 4-4 2-5-3z" fill="#fff" />
              <circle cx="14" cy="4" r="4" fill="#e4d526" />
              <text x="14" y="6.500" textAnchor="middle" fontSize="6" fontFamily="Roboto" fill="#333">2</text>
            </svg>
            <span><small>Oran:</small>5,88</span>
          </Coupon>
        </Page>
        <Scrollbar>
          <svg width="6" height="5" viewBox="0 0 6 5"><path d="M0 5 3 0l3 5z" fill="#777" /></svg>
          <Thumb />
          <svg width="6" height="5" viewBox="0 0 6 5"><path d="M0 0h6L3 5z" fill="#777" /></svg>
        </Scrollbar>
      </Viewport>
      <TaskbarPanel />
      <Overlay>
        <Alert>ABİ DİLENCİ DEGİLİM 5 DOLAR</Alert>
        <Goal>$0 (0.00%)</Goal>
        <GoalRange><span>$0</span><GoalDate>HOŞ İNDER CR</GoalDate><span>$50</span></GoalRange>
      </Overlay>
      <Cursor width="10" height="15" viewBox="0 0 10 15">
        <path d="M1 1v11l2.500-2.500L5.500 14l2-1-2-4H9z" fill="#fff" stroke="#666" />
      </Cursor>
    </Screen>
  );
}
